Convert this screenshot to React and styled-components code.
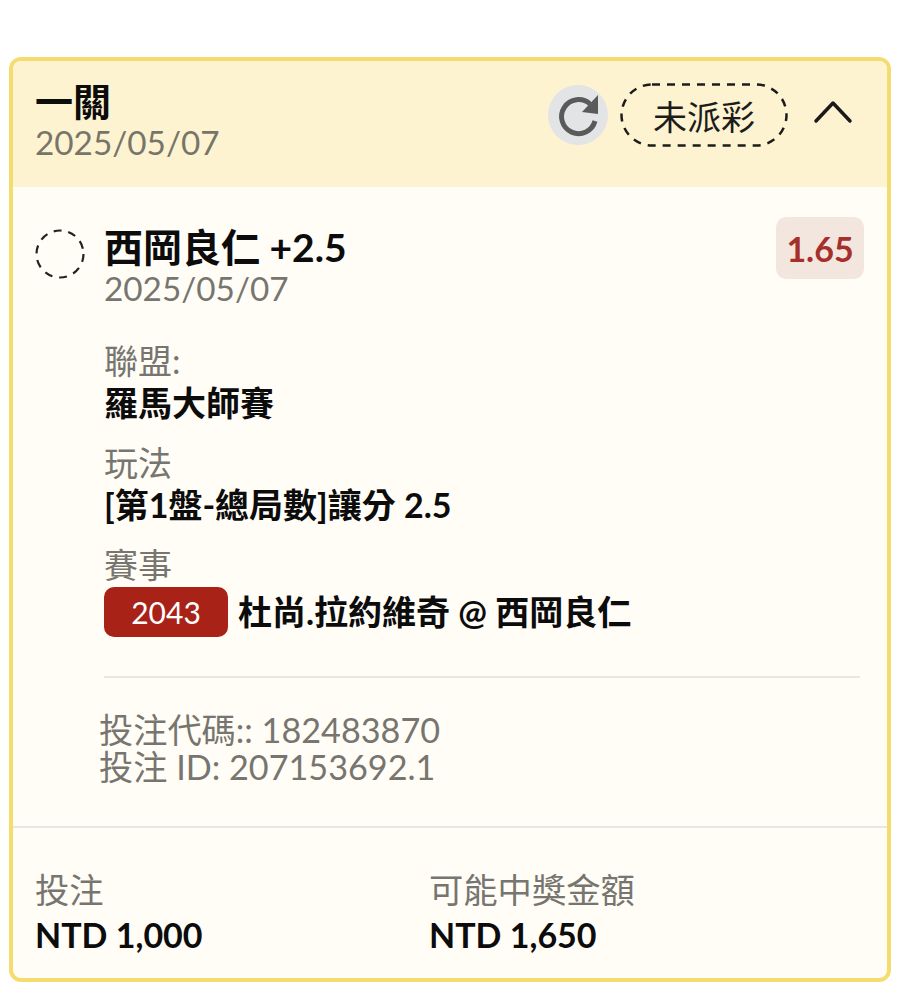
import React from 'react';
import styled, { createGlobalStyle } from 'styled-components';

const Global = createGlobalStyle`
  html, body { margin: 0; padding: 0; background: #fff; }
  body { font-family: Lato, "Noto Sans CJK TC", sans-serif; }
`;

const Page = styled.div`
  width: 901px;
  height: 1000px;
  padding: 57px 10px 0 9px;
  box-sizing: border-box;
`;

const Card = styled.div`
  height: 925px;
  box-sizing: border-box;
  border: 4px solid #f4dc6e;
  border-radius: 12px;
  overflow: hidden;
  background: #fffdf6;
  display: flex;
  flex-direction: column;
`;

const Header = styled.div`
  height: 126px;
  flex: none;
  box-sizing: border-box;
  background: #fdf3d0;
  padding: 18px 34px 0 22px;
  display: flex;
  justify-content: space-between;
  align-items: flex-start;
`;

const Title = styled.div`
  font-size: 38px;
  line-height: 44px;
  font-weight: 700;
  color: #0c0c0c;
`;

const HeaderDate = styled.div`
  font-size: 33.3px;
  line-height: 38px;
  color: #77756a;
`;

const HeaderRight = styled.div`
  display: flex;
  align-items: center;
  margin-top: 4px;
`;

const RefreshCircle = styled.div`
  width: 60px;
  height: 60px;
  border-radius: 50%;
  background: #e2e4e6;
`;

const StatusPill = styled.div`
  position: relative;
  width: 168px;
  height: 64px;
  margin-left: 12px;
  display: flex;
  align-items: center;
  justify-content: center;
  font-size: 34px;
  color: #1c1c1c;
`;

const PillOutline = styled.svg`
  position: absolute;
  inset: 0;
`;

const Chevron = styled.svg`
  margin: 0 0 7px 25px;
`;

const Body = styled.div`
  flex: 1;
  padding: 30px 23px 0 22px;
`;

const BetRow = styled.div`
  display: flex;
  align-items: flex-start;
`;

const DashedDot = styled.svg`
  flex: none;
  margin-top: 12px;
`;

const BetInfo = styled.div`
  margin-left: 19px;
  flex: 1;
`;

const BetName = styled.div`
  font-size: 39px;
  line-height: 44px;
  font-weight: 700;
  color: #0c0c0c;
  margin-top: 8px;
`;

const BetDate = styled.div`
  font-size: 33.3px;
  line-height: 38px;
  color: #77756f;
`;

const Odds = styled.div`
  width: 88px;
  height: 62px;
  border-radius: 10px;
  background: #f3e6df;
  color: #a5302a;
  font-size: 34px;
  font-weight: 700;
  display: flex;
  align-items: center;
  justify-content: center;
`;

const Details = styled.div`
  margin: 33px 0 0 69px;
  display: flex;
  flex-direction: column;
`;

const Field = styled.div`
  margin-bottom: 18px;
`;

const FieldLabel = styled.div`
  font-size: 34px;
  line-height: 42px;
  color: #77756f;
`;

const FieldValue = styled.div`
  font-size: 34px;
  line-height: 42px;
  font-weight: 700;
  color: #0c0c0c;
  display: flex;
  align-items: center;
`;

const MatchId = styled.span`
  width: 124px;
  height: 50px;
  margin: 1px 10px 0 0;
  border-radius: 10px;
  background: #a92218;
  color: #fff;
  font-size: 30px;
  font-weight: 400;
  display: flex;
  align-items: center;
  justify-content: center;
`;

const Divider = styled.div`
  height: 2px;
  background: #e9e8e0;
  margin: 21px 4px 0 69px;
`;

const Codes = styled.div`
  margin: 33px 0 0 64px;
  font-size: 34.2px;
  line-height: 37px;
  color: #77756f;
`;

const Footer = styled.div`
  border-top: 2px solid #e8e8e2;
  padding: 41px 22px 20px;
  display: grid;
  grid-template-columns: 394px 1fr;
`;

const FooterLabel = styled.div`
  font-size: 34.3px;
  line-height: 42px;
  color: #77756f;
`;

const FooterValue = styled.div`
  font-size: 34px;
  line-height: 47px;
  font-weight: 700;
  color: #0c0c0c;
`;

const App = () => (
  <Page>
    <Global />
    <Card>
      <Header>
        <div>
          <Title>一關</Title>
          <HeaderDate>2025/05/07</HeaderDate>
        </div>
        <HeaderRight>
          <RefreshCircle>
            <svg width="60" height="60" viewBox="0 0 60 60" fill="none">
              <path d="M42 19A17 17 0 1 0 47 36" stroke="#5a5a5a" strokeWidth="5" />
              <path d="M50 10v19l-16-2z" fill="#5a5a5a" />
            </svg>
          </RefreshCircle>
          <StatusPill>
            <PillOutline width="168" height="64" viewBox="0 0 168 64" fill="none">
              <rect x="1.5" y="1.5" width="165" height="61" rx="30.5" stroke="#1c1c1c" strokeWidth="2.5" strokeDasharray="8 7" />
            </PillOutline>
            未派彩
          </StatusPill>
          <Chevron width="40" height="24" viewBox="0 0 40 24" fill="none">
            <path d="M3 21 20 3l17 18" stroke="#1a1a1a" strokeWidth="3.5" strokeLinecap="round" strokeLinejoin="round" />
          </Chevron>
        </HeaderRight>
      </Header>
      <Body>
        <BetRow>
          <DashedDot width="50" height="50" viewBox="0 0 50 50" fill="none">
            <circle cx="25" cy="25" r="23.5" stroke="#222" strokeWidth="2.2" strokeDasharray="8 6.8" />
          </DashedDot>
          <BetInfo>
            <BetName>西岡良仁 +2.5</BetName>
            <BetDate>2025/05/07</BetDate>
          </BetInfo>
          <Odds>1.65</Odds>
        </BetRow>
        <Details>
          <Field>
            <FieldLabel>聯盟:</FieldLabel>
            <FieldValue>羅馬大師賽</FieldValue>
          </Field>
          <Field>
            <FieldLabel>玩法</FieldLabel>
            <FieldValue>[第1盤-總局數]讓分 2.5</FieldValue>
          </Field>
          <Field>
            <FieldLabel>賽事</FieldLabel>
            <FieldValue>
              <MatchId>2043</MatchId>
              杜尚.拉約維奇 @ 西岡良仁
            </FieldValue>
          </Field>
        </Details>
        <Divider />
        <Codes>
          <div>投注代碼:: 182483870</div>
          <div>投注 ID: 207153692.1</div>
        </Codes>
      </Body>
      <Footer>
        <div>
          <FooterLabel>投注</FooterLabel>
          <FooterValue>NTD 1,000</FooterValue>
        </div>
        <div>
          <FooterLabel>可能中獎金額</FooterLabel>
          <FooterValue>NTD 1,650</FooterValue>
        </div>
      </Footer>
    </Card>
  </Page>
);

export default App;
